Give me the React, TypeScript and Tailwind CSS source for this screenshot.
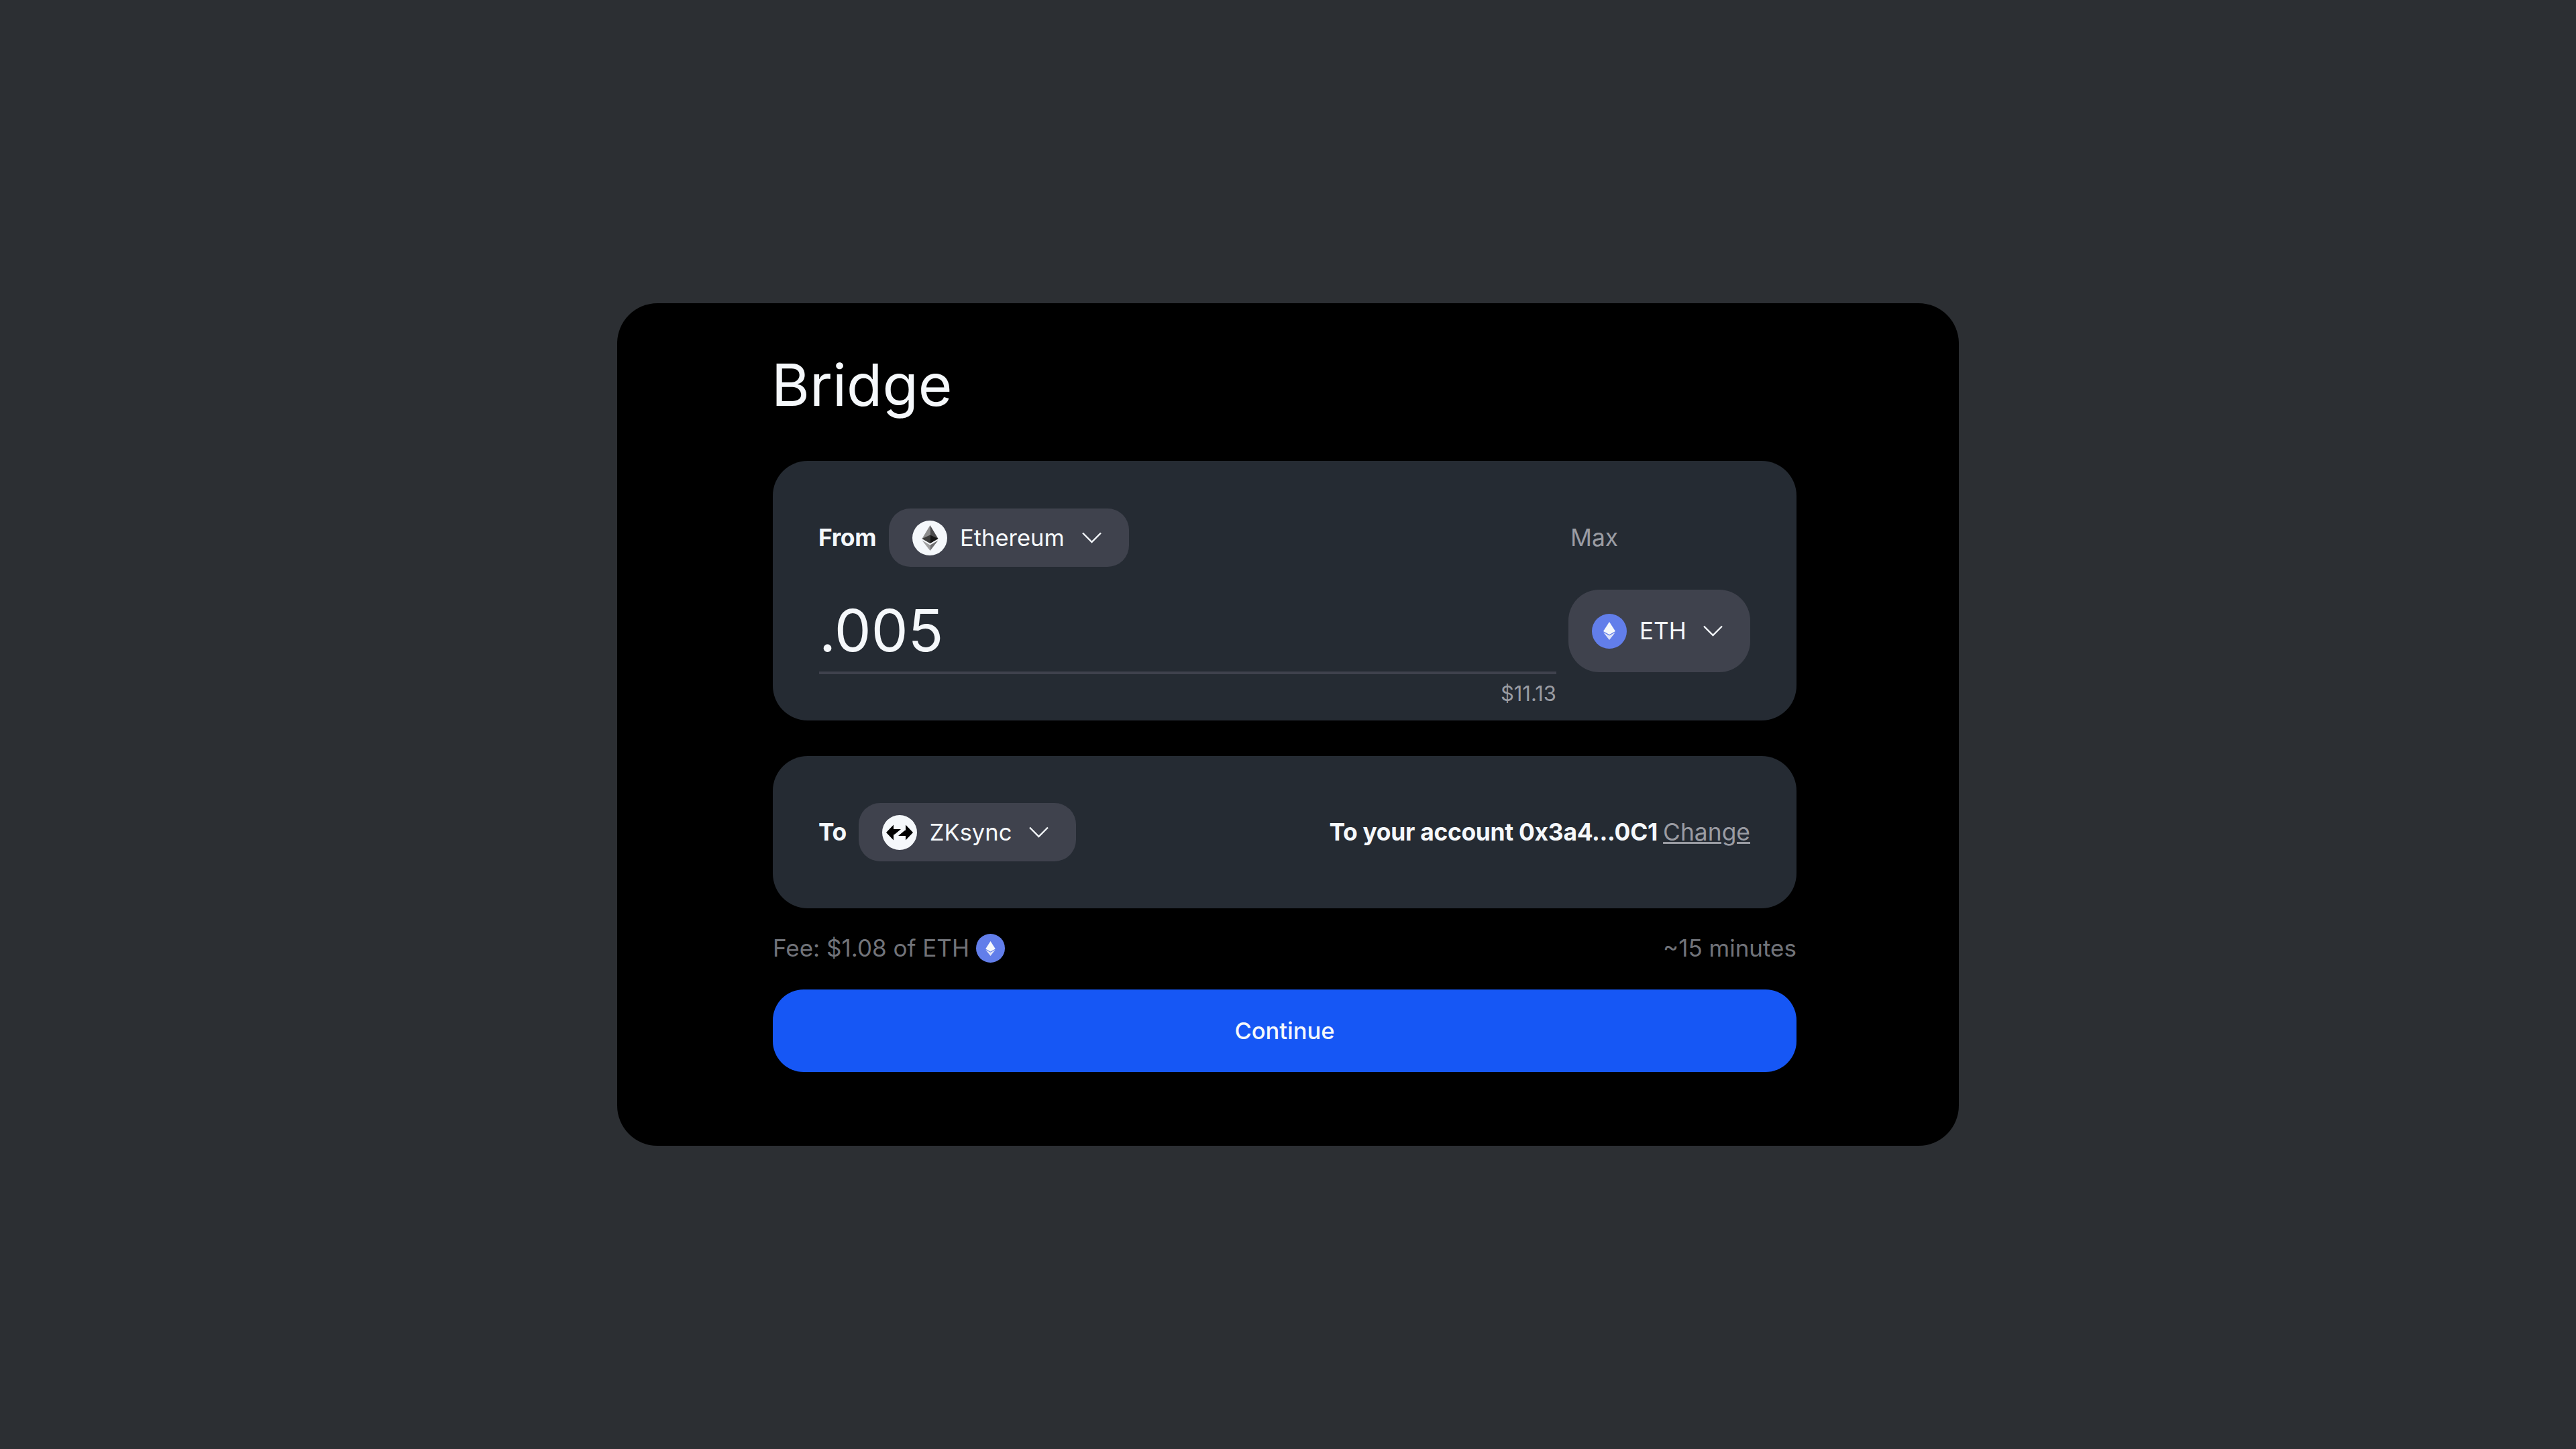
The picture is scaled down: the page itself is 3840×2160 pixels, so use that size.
import React from 'react';

const Chevron = () => (
  <svg className="w-[29px] h-[17px] shrink-0" viewBox="0 0 29 17" fill="none" stroke="#f3f6f9" strokeWidth={2.4}>
    <path d="M1 1.5L14.5 15L28 1.5" />
  </svg>
);

const EthereumIcon = () => (
  <span className="w-[52px] h-[52px] rounded-full bg-[#f5f8fb] flex items-center justify-center shrink-0">
    <svg className="w-[25px] h-[38px]" viewBox="0 0 24 38">
      <path d="M12 0L0 20L12 27V0Z" fill="#8c8c8c" />
      <path d="M12 0L24 20L12 27V0Z" fill="#4a4a4c" />
      <path d="M0 20L12 14.5V27L0 20Z" fill="#3c3c3b" />
      <path d="M24 20L12 14.5V27L24 20Z" fill="#141414" />
      <path d="M0 22.5L12 38V29.5L0 22.5Z" fill="#a0a0a0" />
      <path d="M24 22.5L12 38V29.5L24 22.5Z" fill="#6e6e70" />
    </svg>
  </span>
);

const ZkSyncIcon = () => (
  <span className="w-[52px] h-[52px] rounded-full bg-[#f5f8fb] flex items-center justify-center shrink-0">
    <svg className="w-[40px] h-[24px]" viewBox="0 0 40 24" fill="#000">
      <path d="M0 12L11 0.5V7H22L13 14.5L11 15.5V23.5L0 12Z" />
      <path d="M40 12L29 0.5V8.5L27 9.5L18 17H29V23.5L40 12Z" />
    </svg>
  </span>
);

const EthToken = ({ size }: { size: 'lg' | 'sm' }) => (
  <span
    className={
      size === 'lg'
        ? 'w-[52px] h-[52px] rounded-full bg-[#627eea] flex items-center justify-center shrink-0'
        : 'w-[43px] h-[43px] rounded-full bg-[#627eea] flex items-center justify-center shrink-0'
    }
  >
    <svg className={size === 'lg' ? 'w-[18px] h-[27px]' : 'w-[15px] h-[22px]'} viewBox="0 0 18 27">
      <path d="M9 0L0 14L9 19L18 14L9 0Z" fill="#f5f8fb" />
      <path d="M0 15.5L9 27L18 15.5L9 20.5L0 15.5Z" fill="#dfe4f8" />
    </svg>
  </span>
);

const NetworkPill = ({ icon, name }: { icon: React.ReactNode; name: string }) => (
  <button type="button" className="h-[87px] rounded-[32px] bg-[#3f424d] flex items-center pl-[35px] pr-[41px] text-[34.5px] text-[#f5f8fb]">
    {icon}
    <span className="ml-[19px] mr-[26px]">{name}</span>
    <Chevron />
  </button>
);

export default function App() {
  return (
    <div className="min-h-screen bg-[#2c2f33] flex items-center justify-center font-['Inter',sans-serif]">
      <div className="w-[2000px] bg-black rounded-[60px] pl-[232px] pr-[242px] pt-[62px] pb-[110px]">
        <h1 className="text-[87px] leading-[120px] font-normal text-[#f5f8fb] mb-[53px] -ml-[2px]">Bridge</h1>

        <div className="bg-[#252b33] rounded-[52px] pl-[69px] pr-[69px] pt-[71px] pb-[20px]">
          <div className="flex items-center justify-between">
            <div className="flex items-center gap-[19px] -ml-[1px]">
              <span className="text-[35.4px] font-bold tracking-[-0.4px] text-[#f5f8fb]">From</span>
              <NetworkPill icon={<EthereumIcon />} name="Ethereum" />
            </div>
            <span className="w-[271px] text-[35.4px] text-[#9a9ca3] pl-[3px]">Max</span>
          </div>
          <div className="flex items-start gap-[18px] mt-[34px]">
            <div className="flex-1">
              <div className="h-[126px] leading-[122px] text-[87px] text-[#f5f8fb] border-b-[4px] border-[#3f424d]">.005</div>
              <div className="mt-[9px] text-right text-[31px] leading-[40px] text-[#9a9ca3]">$11.13</div>
            </div>
            <button type="button" className="w-[271px] h-[123px] rounded-[46px] bg-[#3f424d] flex items-center pl-[35px] text-[35px] text-[#f5f8fb]">
              <EthToken size="lg" />
              <span className="ml-[19px] mr-[25px]">ETH</span>
              <Chevron />
            </button>
          </div>
        </div>

        <div className="mt-[53px] h-[227px] bg-[#252b33] rounded-[52px] px-[69px] flex items-center justify-between">
          <div className="flex items-center gap-[18px] -ml-[1px]">
            <span className="text-[35.4px] font-bold tracking-[-0.4px] text-[#f5f8fb]">To</span>
            <NetworkPill icon={<ZkSyncIcon />} name="ZKsync" />
          </div>
          <div className="text-[35.4px] font-bold tracking-[-0.3px] text-[#f5f8fb]">
            To your account 0x3a4...0C1 <a className="font-normal tracking-normal text-[#9a9ca3] underline">Change</a>
          </div>
        </div>

        <div className="mt-[38px] mb-[40px] h-[43px] flex items-center justify-between text-[35px] text-[#717379]">
          <div className="flex items-center gap-[10px]">
            <span>Fee: $1.08 of ETH</span>
            <EthToken size="sm" />
          </div>
          <span>~15 minutes</span>
        </div>

        <button type="button" className="w-full h-[123px] rounded-[46px] bg-[#1657f5] text-[34.5px] font-medium text-[#f5f8fb]">
          Continue
        </button>
      </div>
    </div>
  );
}
